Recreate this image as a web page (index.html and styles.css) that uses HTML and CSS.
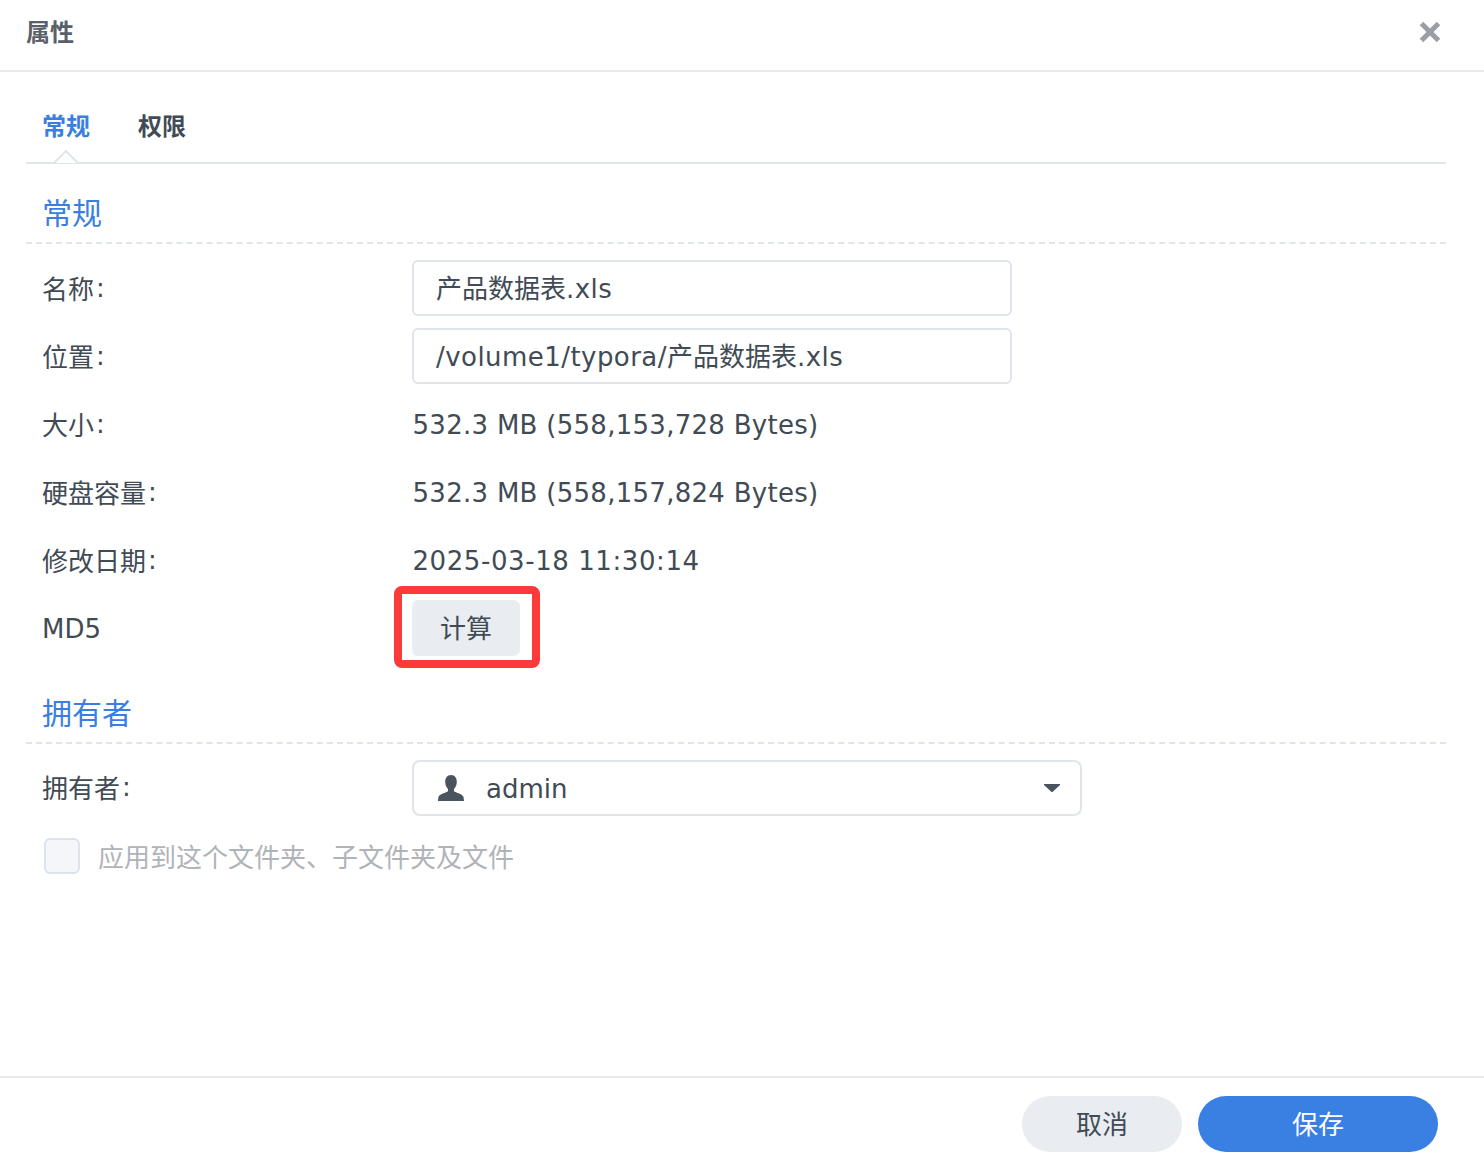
FILE: index.html
```html
<!DOCTYPE html>
<html lang="zh-CN">
<head>
<meta charset="utf-8">
<title>属性</title>
<link rel="stylesheet" href="styles.css">
</head>
<body>
<div class="dialog">
  <header class="titlebar">
    <span class="title">属性</span>
    <svg class="close" width="22" height="22" viewBox="0 0 22 22"><path d="M2.500 2.500L19.500 19.500M19.500 2.500L2.500 19.500" stroke="#9a9ea6" stroke-width="5" fill="none"/></svg>
  </header>
  <main class="content">
    <nav class="tabs">
      <span class="tab active">常规</span>
      <span class="tab">权限</span>
      <svg class="caret" width="26" height="14" viewBox="0 0 26 14"><path d="M0 13H1L13 1L25 13H26" stroke="#dfe5eb" stroke-width="2" fill="#fff"/></svg>
    </nav>
    <h2 class="section first">常规</h2>
    <div class="rows">
      <div class="row"><label class="label">名称<span class="colon">:</span></label><div class="input"><span class="cjk">产品数据表</span>.xls</div></div>
      <div class="row"><label class="label">位置<span class="colon">:</span></label><div class="input">/volume1/typora/<span class="cjk">产品数据表</span>.xls</div></div>
      <div class="row"><label class="label">大小<span class="colon">:</span></label><div class="value">532.3 MB (558,153,728 Bytes)</div></div>
      <div class="row"><label class="label">硬盘容量<span class="colon">:</span></label><div class="value">532.3 MB (558,157,824 Bytes)</div></div>
      <div class="row"><label class="label">修改日期<span class="colon">:</span></label><div class="value date">2025-03-18 11:30:14</div></div>
      <div class="row"><label class="label latin">MD5</label><div class="btn-wrap"><button class="btn calc">计算</button><span class="highlight"></span></div></div>
    </div>
    <h2 class="section second">拥有者</h2>
    <div class="rows">
      <div class="row"><label class="label latin">拥有者<span class="colon">:</span></label>
        <div class="select">
          <svg class="user" width="26" height="26" viewBox="0 0 26 26"><path fill="#4a5360" d="M13 0c3.700 0 5.800 2.800 5.800 6.800 0 3-1.200 5.600-2.800 7.200v2.200c1.400 1.300 9.200 2.800 9.600 6L26 26H0l.4-3.800c.4-3.200 8.200-4.700 9.600-6V14c-1.600-1.600-2.800-4.200-2.800-7.200C7.200 2.800 9.300 0 13 0z"/></svg>
          <span class="select-text">admin</span>
          <svg class="arrow" width="16" height="8" viewBox="0 0 16 8"><path fill="#4a5360" d="M0 0H16V1L8.500 8H7.500L0 1z"/></svg>
        </div>
      </div>
      <div class="check-row"><span class="checkbox"></span><span class="check-label">应用到这个文件夹、子文件夹及文件</span></div>
    </div>
  </main>
  <footer class="footer">
    <button class="pill cancel">取消</button>
    <button class="pill save">保存</button>
  </footer>
</div>
</body>
</html>
```
FILE: styles.css
```css
* { box-sizing: border-box; }
html, body { margin: 0; height: 100%; }
body {
  background: #fff;
  color: #414b55;
  font-family: "DejaVu Sans", "Noto Sans CJK SC", sans-serif;
  font-size: 26px;
  overflow: hidden;
}
.dialog { display: flex; flex-direction: column; height: 1166px; }
.titlebar {
  height: 72px;
  flex: none;
  border-bottom: 2px solid #e6e9ed;
  display: flex;
  align-items: center;
  justify-content: space-between;
  padding: 0 43px 6px 26px;
}
.title { font-size: 24px; font-weight: 700; line-height: 30px; margin-top: -2px; color: #5a6069; font-family: "Noto Sans CJK SC", sans-serif; }
.close { display: block; }
.content { flex: 1; padding: 0 38px 0 26px; }
.tabs {
  position: relative;
  height: 92px;
  border-bottom: 2px solid #dfe5eb;
  display: flex;
  gap: 48px;
  padding: 38px 0 0 16px;
  font-family: "Noto Sans CJK SC", sans-serif;
}
.tab { font-size: 24px; font-weight: 700; line-height: 30px; color: #414b55; }
.tab.active { color: #3a7fdf; }
.caret { position: absolute; left: 27px; bottom: -2px; }
.section {
  margin: 0;
  font-size: 30px;
  font-weight: 400;
  line-height: 40px;
  color: #3a7fdf;
  border-bottom: 2px dashed #dfe5eb;
  padding-left: 16px;
  font-family: "Noto Sans CJK SC", sans-serif;
}
.section.first { height: 80px; padding-top: 27px; }
.section.second { height: 80px; margin-top: 8px; padding-top: 27px; }
.rows { display: flex; flex-direction: column; gap: 12px; padding-top: 16px; }
.row { display: flex; align-items: center; height: 56px; padding-left: 16px; line-height: 56px; }
.label { width: 370px; flex: none; padding-top: 4px; }
.label.latin { padding-top: 2px; }
.colon { margin-left: 2px; position: relative; top: -2px; }
.input {
  width: 600px;
  height: 56px;
  border: 2px solid #dfe5eb;
  border-radius: 6px;
  padding-left: 22px;
  line-height: 54px;
  letter-spacing: 0.45px;
}
.cjk { letter-spacing: 0; }
.value { padding: 2px 0 0 0.5px; letter-spacing: 0.28px; }
.value.date { letter-spacing: 0.58px; }
.btn-wrap { position: relative; display: flex; }
.btn {
  width: 108px;
  height: 56px;
  border: 0;
  border-radius: 6px;
  background: #e9edf1;
  color: #414b55;
  font: inherit;
  line-height: 52px;
  padding: 2px 0 0;
}
.highlight {
  position: absolute;
  left: -18px;
  top: -14px;
  width: 146px;
  height: 82px;
  border: 8px solid #fb3a3a;
  border-radius: 8px;
}
.select {
  width: 670px;
  height: 56px;
  border: 2px solid #dfe5eb;
  border-radius: 8px;
  display: flex;
  align-items: center;
  padding: 0 20px 0 24px;
}
.user { flex: none; }
.select-text { margin-left: 22px; flex: 1; padding-top: 2px; }
.arrow { flex: none; }
.check-row { display: flex; align-items: center; height: 56px; padding-left: 18px; gap: 18px; line-height: 56px; }
.checkbox {
  width: 36px;
  height: 36px;
  border: 2px solid #dce3ec;
  border-radius: 6px;
  background: #f4f6fa;
}
.check-label { color: #b0b3b8; padding-top: 4px; }
.footer {
  height: 90px;
  flex: none;
  border-top: 2px solid #e8e9f0;
  display: flex;
  justify-content: flex-end;
  gap: 16px;
  padding: 18px 46px 0 0;
}
.pill { height: 56px; border: 0; border-radius: 28px; font: inherit; line-height: 52px; padding: 2px 0 0; }
.cancel { width: 160px; background: #e9edf1; color: #414b55; }
.save { width: 240px; background: #3a80e2; color: #fff; }
```
